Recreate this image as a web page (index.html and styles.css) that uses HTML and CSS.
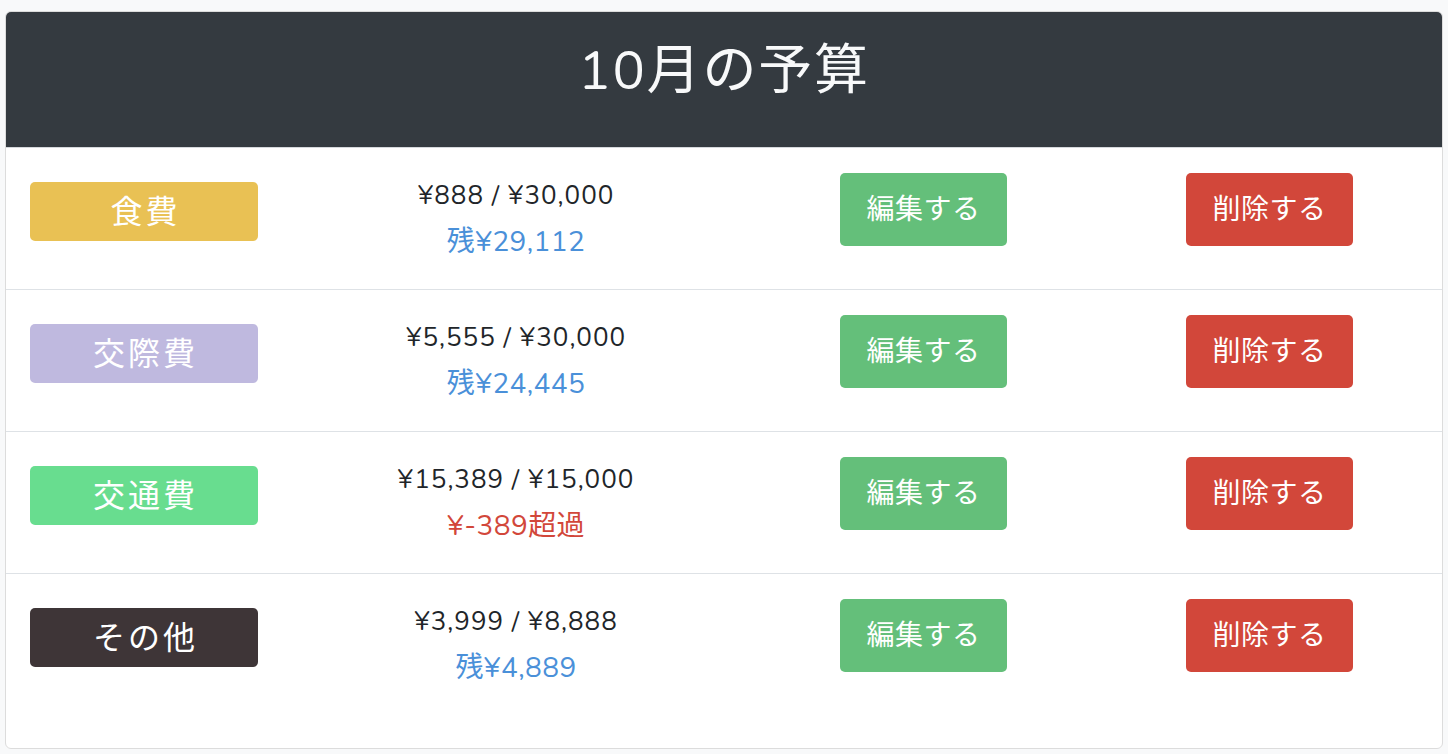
FILE: index.html
```html
<!DOCTYPE html>
<html lang="ja">
<head>
<meta charset="utf-8">
<title>10月の予算</title>
<link rel="stylesheet" href="styles.css">
</head>
<body>
<div class="page">
  <div class="card">
    <div class="card-header">
      <h1 class="title">10月の予算</h1>
    </div>
    <div class="card-body">
      <div class="budget-row">
        <div class="badge badge-food">食費</div>
        <div class="amounts">
          <div class="amount-main">¥888 / ¥30,000</div>
          <div class="amount-rest">残¥29,112</div>
        </div>
        <button class="btn btn-edit">編集する</button>
        <button class="btn btn-delete">削除する</button>
      </div>
      <div class="budget-row">
        <div class="badge badge-social">交際費</div>
        <div class="amounts">
          <div class="amount-main">¥5,555 / ¥30,000</div>
          <div class="amount-rest">残¥24,445</div>
        </div>
        <button class="btn btn-edit">編集する</button>
        <button class="btn btn-delete">削除する</button>
      </div>
      <div class="budget-row">
        <div class="badge badge-transport">交通費</div>
        <div class="amounts">
          <div class="amount-main">¥15,389 / ¥15,000</div>
          <div class="amount-rest over">¥-389超過</div>
        </div>
        <button class="btn btn-edit">編集する</button>
        <button class="btn btn-delete">削除する</button>
      </div>
      <div class="budget-row last">
        <div class="badge badge-other">その他</div>
        <div class="amounts">
          <div class="amount-main">¥3,999 / ¥8,888</div>
          <div class="amount-rest">残¥4,889</div>
        </div>
        <button class="btn btn-edit">編集する</button>
        <button class="btn btn-delete">削除する</button>
      </div>
    </div>
  </div>
</div>
</body>
</html>
```

FILE: styles.css
```css
html, body {
  margin: 0;
  padding: 0;
  background: #f8f9fa;
}
body {
  font-family: "Nunito", "Noto Sans", "Noto Sans CJK JP", sans-serif;
  color: #212529;
}
.page {
  padding: 11px 5px 0 5px;
}
.card {
  background: #ffffff;
  border: 1px solid #dcdcdc;
  border-radius: 6px;
  overflow: hidden;
  height: 738px;
  box-sizing: border-box;
}
.card-header {
  background: #343a40;
  height: 135px;
  display: flex;
  align-items: center;
  justify-content: center;
  border-bottom: 1px solid #d5d8dc;
}
.title {
  margin: 0;
  color: #f8f9fa;
  font-weight: 400;
  font-size: 54px;
  letter-spacing: 1.8px;
  line-height: 1;
  padding-bottom: 18px;
}
.budget-row {
  display: flex;
  align-items: flex-start;
  padding: 25px 24px 0 24px;
  height: 142px;
  box-sizing: border-box;
  border-bottom: 1px solid #dee2e6;
}
.budget-row.last {
  border-bottom: none;
  padding-top: 25px;
}
.badge {
  width: 228px;
  height: 59px;
  margin-top: 9px;
  border-radius: 5px;
  color: #ffffff;
  font-size: 32px;
  letter-spacing: 3px;
  padding: 0 0 4px 3px;
  display: flex;
  align-items: center;
  justify-content: center;
  box-sizing: border-box;
}
.badge-food { background: #e9c154; }
.badge-social { background: #bfb9df; }
.badge-transport { background: #68dd8f; }
.badge-other { background: #3e3537; }
.amounts {
  width: 516px;
  text-align: center;
  margin-top: 3px;
}
.amount-main {
  font-size: 26px;
  letter-spacing: 1px;
  line-height: 40px;
  color: #212529;
}
.amount-rest {
  font-size: 28px;
  letter-spacing: 0.4px;
  line-height: 52px;
  color: #4a90d9;
}
.amount-rest.over {
  color: #d2473a;
}
.btn {
  width: 167px;
  height: 73px;
  border: none;
  border-radius: 5px;
  color: #ffffff;
  font-family: "Noto Sans CJK JP", sans-serif;
  font-size: 28px;
  letter-spacing: 0.5px;
  padding: 0 0 5px 0;
  display: flex;
  align-items: center;
  justify-content: center;
}
.btn-edit {
  background: #64bf7a;
  margin-left: 66px;
}
.btn-delete {
  background: #d2473a;
  margin-left: 179px;
}
```
